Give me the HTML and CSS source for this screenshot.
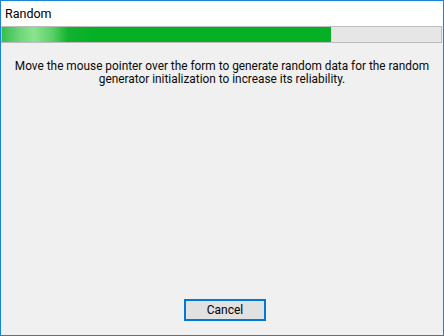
FILE: index.html
```html
<!DOCTYPE html>
<html>
<head>
<meta charset="utf-8">
<title>Random</title>
<link rel="stylesheet" href="styles.css">
</head>
<body>
<div class="window">
  <div class="titlebar">Random</div>
  <div class="progress"><div class="progress-fill" style="width:329px"></div></div>
  <div class="content">
    <p class="message">Move the mouse pointer over the form to generate random data for the random generator initialization to increase its reliability.</p>
    <div class="actions">
      <button class="btn" type="button">Cancel</button>
    </div>
  </div>
</div>
</body>
</html>
```
FILE: styles.css
```css
html, body {
  margin: 0;
  padding: 0;
}
body {
  width: 444px;
  height: 336px;
  overflow: hidden;
  font-family: Roboto, "Liberation Sans", sans-serif;
  font-size: 11.85px;
  color: #000;
}
.window {
  box-sizing: border-box;
  width: 444px;
  height: 336px;
  border: 1px solid #1883d7;
  background: #f0f0f0;
  display: flex;
  flex-direction: column;
}
.titlebar {
  height: 25px;
  background: #fff;
  padding-left: 4px;
  font-size: 12.5px;
  line-height: 26px;
  flex: none;
}
.progress {
  box-sizing: border-box;
  height: 17px;
  margin-right: 1px;
  border: 1px solid #bcbcbc;
  background: #e6e6e6;
  flex: none;
}
.progress-fill {
  height: 100%;
  background: linear-gradient(90deg, #35c050 0px, #6fd679 18px, #8be48f 32px, #5cd068 50px, #12b22f 66px, #06b025 90px, #06b025 100%);
}
.content {
  flex: 1;
  display: flex;
  flex-direction: column;
  align-items: center;
  padding: 17px 0 14px;
}
.message {
  margin: 0;
  width: 420px;
  text-align: center;
  line-height: 13px;
  color: #0a0a0a;
}
.actions {
  margin-top: auto;
  display: flex;
  justify-content: center;
}
.btn {
  box-sizing: border-box;
  width: 82px;
  height: 22px;
  margin-left: 6px;
  border: 2px solid #0078d7;
  background: #e1e1e1;
  font-family: inherit;
  font-size: 12px;
  color: #000;
  padding: 0;
}
```
